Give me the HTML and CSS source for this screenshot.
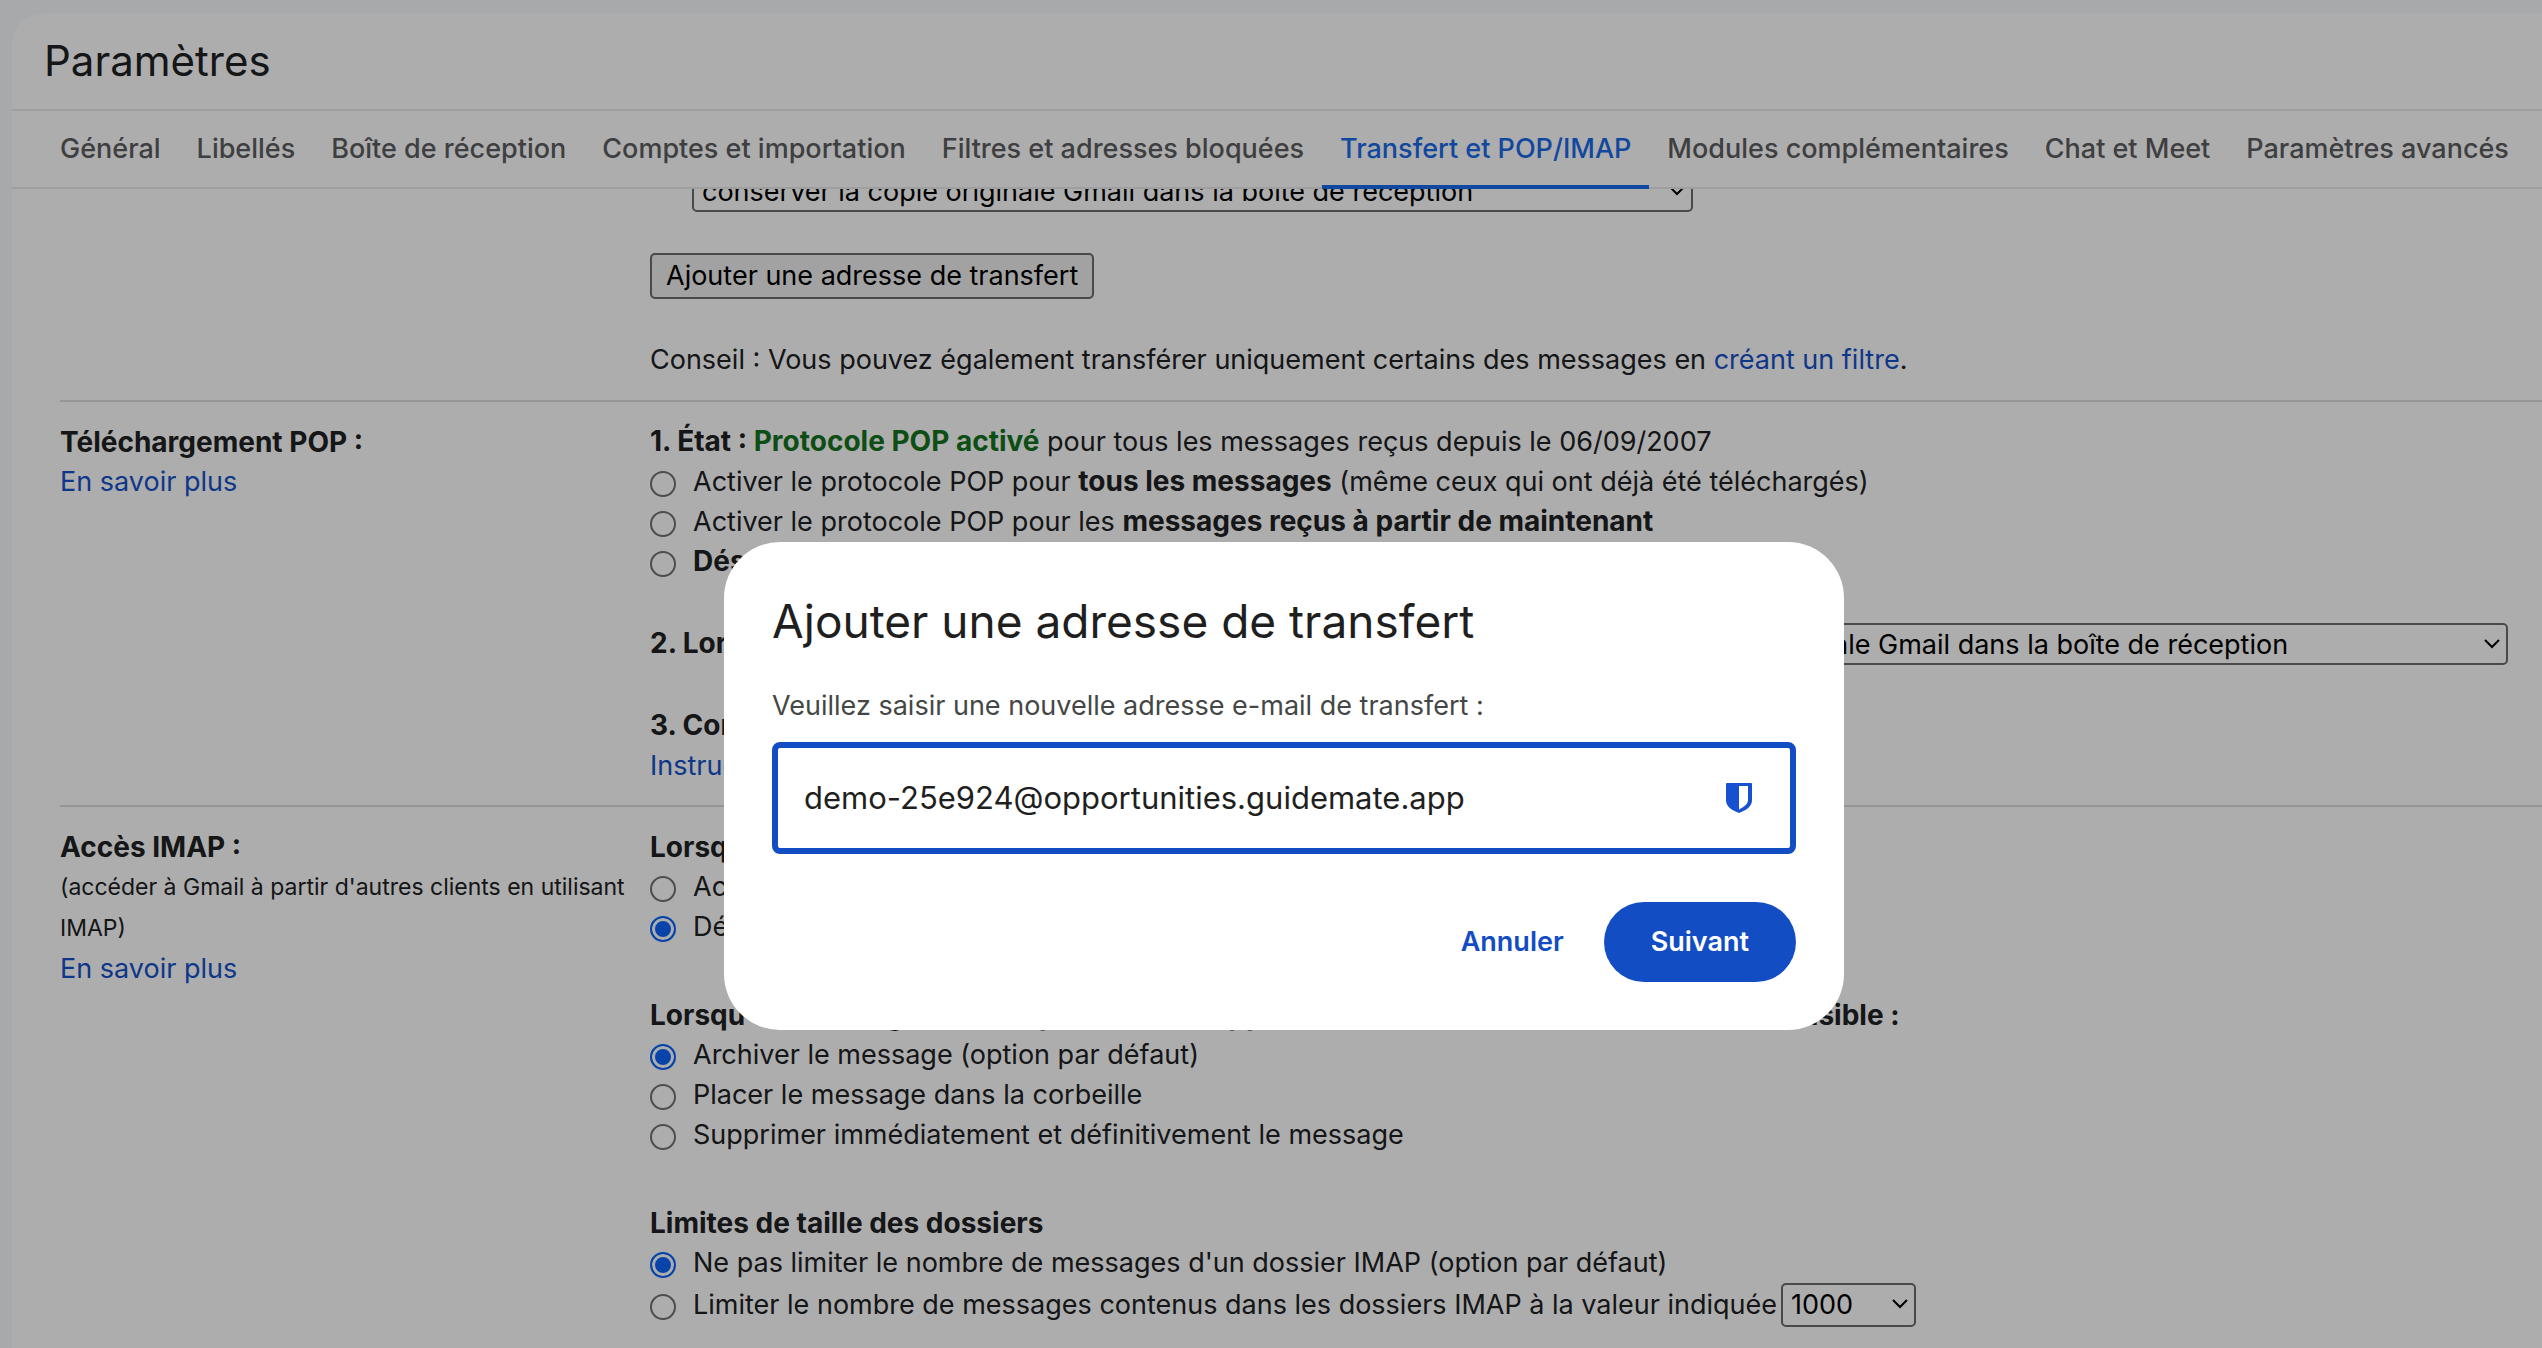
FILE: index.html
```html
<!DOCTYPE html>
<html lang="fr">
<head>
<meta charset="utf-8">
<meta name="viewport" content="width=device-width, initial-scale=1">
<title>Paramètres</title>
<link rel="stylesheet" href="styles.css">
</head>
<body>
<main class="card">
  <header class="card-header"><h1 class="page-title">Paramètres</h1></header>
  <nav class="tabs">
    <a class="tab" href="#general">Général</a>
    <a class="tab" href="#labels">Libellés</a>
    <a class="tab" href="#inbox">Boîte de réception</a>
    <a class="tab" href="#accounts">Comptes et importation</a>
    <a class="tab" href="#filters">Filtres et adresses bloquées</a>
    <a class="tab tab-active" href="#fwdandpop" aria-current="page">Transfert et POP/IMAP</a>
    <a class="tab" href="#addons">Modules complémentaires</a>
    <a class="tab" href="#chat">Chat et Meet</a>
    <a class="tab" href="#advanced">Paramètres avancés</a>
  </nav>
  <div class="scroll">
    <section class="section section-forward">
      <div class="section-name"></div>
      <div class="groups">
        <div class="select select-wide indent">
          <select aria-label="Copie Gmail après transfert"><option>conserver la copie originale Gmail dans la boîte de réception</option></select>
          <svg class="chevron" viewBox="0 0 16 10"><path d="M1 1l7 7 7-7"/></svg>
        </div>
        <div><button class="plain-button" type="button">Ajouter une adresse de transfert</button></div>
        <p class="line">Conseil : Vous pouvez également transférer uniquement certains des messages en <a class="link" href="#filter">créant un filtre</a>.</p>
      </div>
    </section>

    <section class="section">
      <div class="section-name">
        <h2 class="line heading">Téléchargement POP :</h2>
        <p class="line"><a class="link" href="#help-pop">En savoir plus</a></p>
      </div>
      <div class="groups">
        <div>
          <p class="line"><strong>1. État : <span class="enabled">Protocole POP activé</span></strong> pour tous les messages reçus depuis le 06/09/2007</p>
          <label class="option"><input class="radio" type="radio" name="pop"><span>Activer le protocole POP pour <strong>tous les messages</strong> (même ceux qui ont déjà été téléchargés)</span></label>
          <label class="option"><input class="radio" type="radio" name="pop"><span>Activer le protocole POP pour les <strong>messages reçus à partir de maintenant</strong></span></label>
          <label class="option"><input class="radio" type="radio" name="pop"><span><strong>Désactiver</strong> le protocole POP</span></label>
        </div>
        <div class="select-row">
          <label class="heading" for="pop-action">2. Lorsque les messages sont récupérés avec POP</label>
          <div class="select select-wide">
            <select id="pop-action"><option>conserver la copie originale Gmail dans la boîte de réception</option></select>
            <svg class="chevron" viewBox="0 0 16 10"><path d="M1 1l7 7 7-7"/></svg>
          </div>
        </div>
        <div>
          <p class="line"><strong>3. Configurer votre client de messagerie</strong></p>
          <p class="line"><a class="link" href="#instructions">Instructions de configuration</a></p>
        </div>
      </div>
    </section>

    <section class="section section-imap">
      <div class="section-name">
        <h2 class="line heading">Accès IMAP :</h2>
        <p class="note">(accéder à Gmail à partir d'autres clients en utilisant IMAP)</p>
        <p class="line"><a class="link" href="#help-imap">En savoir plus</a></p>
      </div>
      <div class="groups">
        <div>
          <h3 class="line heading">Lorsque je marque un message IMAP comme supprimé :</h3>
          <label class="option"><input class="radio" type="radio" name="expunge"><span>Activer l'effacement automatique</span></label>
          <label class="option"><input class="radio" type="radio" name="expunge" checked><span>Désactiver l'effacement automatique</span></label>
        </div>
        <div>
          <h3 class="line heading">Lorsqu'un message est marqué comme supprimé et effacé du dernier dossier IMAP visible :</h3>
          <label class="option"><input class="radio" type="radio" name="deleted" checked><span>Archiver le message (option par défaut)</span></label>
          <label class="option"><input class="radio" type="radio" name="deleted"><span>Placer le message dans la corbeille</span></label>
          <label class="option"><input class="radio" type="radio" name="deleted"><span>Supprimer immédiatement et définitivement le message</span></label>
        </div>
        <div>
          <h3 class="line heading">Limites de taille des dossiers</h3>
          <label class="option"><input class="radio" type="radio" name="limit" checked><span>Ne pas limiter le nombre de messages d'un dossier IMAP (option par défaut)</span></label>
          <div class="limit-row">
            <label class="option"><input class="radio" type="radio" name="limit"><span>Limiter le nombre de messages contenus dans les dossiers IMAP à la valeur indiquée</span></label>
            <div class="select select-small">
              <select aria-label="Nombre de messages"><option>1000</option></select>
              <svg class="chevron" viewBox="0 0 16 10"><path d="M1 1l7 7 7-7"/></svg>
            </div>
          </div>
        </div>
      </div>
    </section>
  </div>
</main>

<div class="scrim">
  <form class="dialog" role="dialog" aria-modal="true" aria-labelledby="dialog-title">
    <h2 class="dialog-title" id="dialog-title">Ajouter une adresse de transfert</h2>
    <label class="dialog-label" for="address">Veuillez saisir une nouvelle adresse e-mail de transfert :</label>
    <div class="field">
      <input class="field-input" id="address" type="text" value="demo-25e924@opportunities.guidemate.app">
      <svg class="shield" viewBox="0 0 26 30"><path fill-rule="evenodd" d="M1 0h24q1 0 1 1v16c0 6-5 10-13 13C5 27 0 23 0 17V1q0-1 1-1zM13 3v23.500c6-3 9-6 9-9.500V3z"/></svg>
    </div>
    <div class="dialog-actions">
      <button class="text-button" type="button">Annuler</button>
      <button class="filled-button" type="button">Suivant</button>
    </div>
  </form>
</div>
</body>
</html>
```
FILE: styles.css
```css
* {
  box-sizing: border-box;
}

body {
  margin: 0;
  height: 100vh;
  overflow: hidden;
  display: flex;
  padding: 13px 0 0 12px;
  background: #f6f9fd;
  color: #202124;
  font: 27px/40px Inter, sans-serif;
}

h1, h2, h3, p {
  margin: 0;
}

button, select, input {
  font: inherit;
  color: inherit;
}

a {
  text-decoration: none;
}

strong, .heading {
  font-size: 28px;
  font-weight: 700;
}

strong {
  line-height: 1;
}

/* Settings card */
.card {
  flex: 1;
  min-width: 0;
  display: flex;
  flex-direction: column;
  background: #fff;
  border-radius: 32px 0 0 0;
}

.card-header {
  padding: 22px 32px;
  border-bottom: 2px solid #ebebeb;
}

.page-title {
  font-size: 42px;
  line-height: 52px;
  font-weight: 400;
}

.tabs {
  display: flex;
  height: 78px;
  padding-left: 30px;
  border-bottom: 2px solid #ebebeb;
}

.tab {
  display: flex;
  align-items: center;
  margin-bottom: -2px;
  padding: 2px 18px 0;
  border-bottom: 4px solid transparent;
  color: #5c5d5f;
  font-weight: 500;
  white-space: nowrap;
}

.tab-active {
  border-color: #1a6aea;
  color: #1a6aea;
}

.scroll {
  flex: 1;
  min-height: 0;
  padding-left: 48px;
  overflow: hidden;
}

.section {
  display: grid;
  grid-template-columns: 590px 1fr;
  padding: 20px 0 19px;
  border-bottom: 2px solid #dedede;
}

/* The pane is scrolled part of the way into this section */
.section-forward {
  margin-top: -19px;
  padding: 0 0 20px;
}

.section-imap {
  border-bottom: 0;
}

.section-name {
  padding-right: 20px;
}

.groups {
  display: flex;
  flex-direction: column;
  gap: 41px;
}

.section-imap .groups {
  gap: 48px;
}

.line, .option {
  line-height: 40px;
}

.note {
  font-size: 23px;
  line-height: 41px;
}

.link {
  color: #1552ca;
}

.enabled {
  color: #14731e;
}

.option {
  display: flex;
  gap: 17px;
}

.indent {
  margin-left: 42px;
}

.radio {
  appearance: none;
  flex: none;
  width: 26px;
  height: 26px;
  margin: 9px 0 0;
  border: 2px solid #727272;
  border-radius: 50%;
}

.radio:checked {
  border-color: #0b64f8;
  background: #0b64f8;
  box-shadow: inset 0 0 0 3px #fff;
}

.select {
  position: relative;
  height: 42px;
}

.select select {
  appearance: none;
  width: 100%;
  height: 100%;
  padding: 0 8px;
  border: 2px solid #6c6c6c;
  border-radius: 5px;
  background: #fff;
  color: #000;
}

.select-wide {
  width: 1001px;
}

.select-small {
  width: 135px;
  height: 44px;
}

.chevron {
  position: absolute;
  right: 8px;
  top: 16px;
  width: 16px;
  height: 10px;
  fill: none;
  stroke: #000;
  stroke-width: 2;
}

.select-row {
  display: flex;
  justify-content: space-between;
  padding-right: 34px;
  white-space: nowrap;
}

.limit-row {
  display: flex;
  align-items: center;
  gap: 4px;
}

.plain-button {
  display: block;
  height: 46px;
  padding: 0 14px;
  border: 2px solid #6c6c6c;
  border-radius: 5px;
  background: #efefef;
  color: #000;
}

/* Dialog */
.scrim {
  position: fixed;
  inset: 0;
  display: grid;
  place-items: center;
  padding: 224px 0 0 26px;
  background: rgba(0, 0, 0, 0.32);
}

.dialog {
  display: flex;
  flex-direction: column;
  width: 1120px;
  padding: 48px;
  border-radius: 56px;
  background: #fff;
}

.dialog-title {
  font-size: 46px;
  line-height: 62px;
  font-weight: 400;
  color: #1f1f1f;
}

.dialog-label {
  padding: 34px 0 16px;
  color: #444746;
}

.field {
  display: flex;
  align-items: center;
  height: 112px;
  padding: 0 38px 0 26px;
  border: 6px solid #124dc4;
  border-radius: 8px;
}

.field-input {
  flex: 1;
  min-width: 0;
  padding: 0;
  border: 0;
  outline: 0;
  font-size: 31px;
  color: #1f1f1f;
}

.shield {
  width: 26px;
  height: 30px;
  fill: #1850d2;
}

.dialog-actions {
  display: flex;
  justify-content: flex-end;
  gap: 16px;
  padding-top: 48px;
}

.text-button, .filled-button {
  height: 80px;
  border: 0;
  border-radius: 40px;
  font-weight: 600;
}

.text-button {
  padding: 0 24px;
  background: none;
  color: #124dc4;
}

.filled-button {
  padding: 0 47px;
  background: #124dc4;
  color: #fff;
}
```
